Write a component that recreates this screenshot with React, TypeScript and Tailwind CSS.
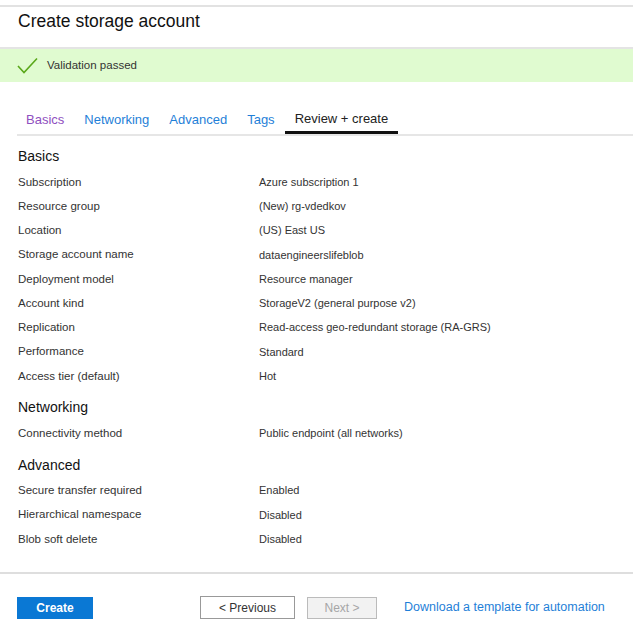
const font = { fontFamily: '"Liberation Sans", Arial, sans-serif' };

type Row = [string, string];

const sections: { title: string; rows: Row[] }[] = [
  {
    title: "Basics",
    rows: [
      ["Subscription", "Azure subscription 1"],
      ["Resource group", "(New) rg-vdedkov"],
      ["Location", "(US) East US"],
      ["Storage account name", "dataengineerslifeblob"],
      ["Deployment model", "Resource manager"],
      ["Account kind", "StorageV2 (general purpose v2)"],
      ["Replication", "Read-access geo-redundant storage (RA-GRS)"],
      ["Performance", "Standard"],
      ["Access tier (default)", "Hot"],
    ],
  },
  {
    title: "Networking",
    rows: [["Connectivity method", "Public endpoint (all networks)"]],
  },
  {
    title: "Advanced",
    rows: [
      ["Secure transfer required", "Enabled"],
      ["Hierarchical namespace", "Disabled"],
      ["Blob soft delete", "Disabled"],
    ],
  },
];

const tabs = [
  { label: "Basics", cls: "text-[#8f4fc0]" },
  { label: "Networking", cls: "text-[#1f7fd8]" },
  { label: "Advanced", cls: "text-[#1f7fd8]" },
  { label: "Tags", cls: "text-[#1f7fd8]" },
  { label: "Review + create", cls: "text-[#222] border-b-[3px] border-[#111]" },
];

export default function App() {
  return (
    <div className="w-[633px] h-[640px] bg-white overflow-hidden text-[#333]" style={font}>
      <div className="h-[5px]" />
      <div className="h-[2px] bg-[#e2e2e2]" />

      {/* title */}
      <div className="h-[39px] pl-[18px] flex items-center">
        <h1 className="text-[17.5px] text-[#111] pb-[10px]">Create storage account</h1>
      </div>

      {/* validation banner */}
      <div className="mt-[1px] border-t-[2px] border-[#e4e4e4] bg-[#e0fbd0] h-[35px] flex items-center pl-[17px] gap-[9px]">
        <svg width="21" height="18" viewBox="0 0 21 18" className="shrink-0">
          <polyline points="1,9 7,15.5 20,1.5" fill="none" stroke="#5aa81a" strokeWidth="1.6" />
        </svg>
        <span className="text-[11.5px] text-[#333]">Validation passed</span>
      </div>

      {/* tabs */}
      <div className="mt-[22px] ml-[17px] border-b-[2px] border-[#e6e6e6] h-[32px]">
        <div className="-ml-[1px] flex h-full">
          {tabs.map((t) => (
            <div key={t.label} className={`px-[10px] flex items-center text-[13px] pt-[2px] ${t.cls}`}>
              {t.label}
            </div>
          ))}
        </div>
      </div>

      {/* review content */}
      <div className="pl-[18px] pt-[7px]">
        {sections.map((s, i) => (
          <div key={s.title} className={i > 0 ? "mt-[6px]" : ""}>
            <div className="h-[27px] flex items-center text-[14px] text-[#111]">{s.title}</div>
            {s.rows.map(([k, v]) => (
              <div key={k} className="h-[24.25px] flex items-center text-[11.5px] text-[#333]">
                <div className="w-[241px]">{k}</div>
                <div className="text-[11px]">{v}</div>
              </div>
            ))}
          </div>
        ))}
      </div>

      {/* footer */}
      <div className="mt-[21px] h-[2px] bg-[#dedede]" />
      <div className="flex items-center pl-[17px] pt-[22px]">
        <button className="w-[76px] h-[22px] bg-[#0a78d4] text-white text-[12px] font-bold">
          Create
        </button>
        <button className="ml-[107px] w-[95px] h-[23px] border border-[#999] bg-white text-[#333] text-[12px]">
          &lt; Previous
        </button>
        <button className="ml-[12px] w-[70px] h-[22px] border border-[#bbb] bg-[#f2f2f2] text-[#a6a6a6] text-[12px]">
          Next &gt;
        </button>
        <a className="ml-[27px] text-[12.5px] text-[#1f7fd8]">Download a template for automation</a>
      </div>
    </div>
  );
}
